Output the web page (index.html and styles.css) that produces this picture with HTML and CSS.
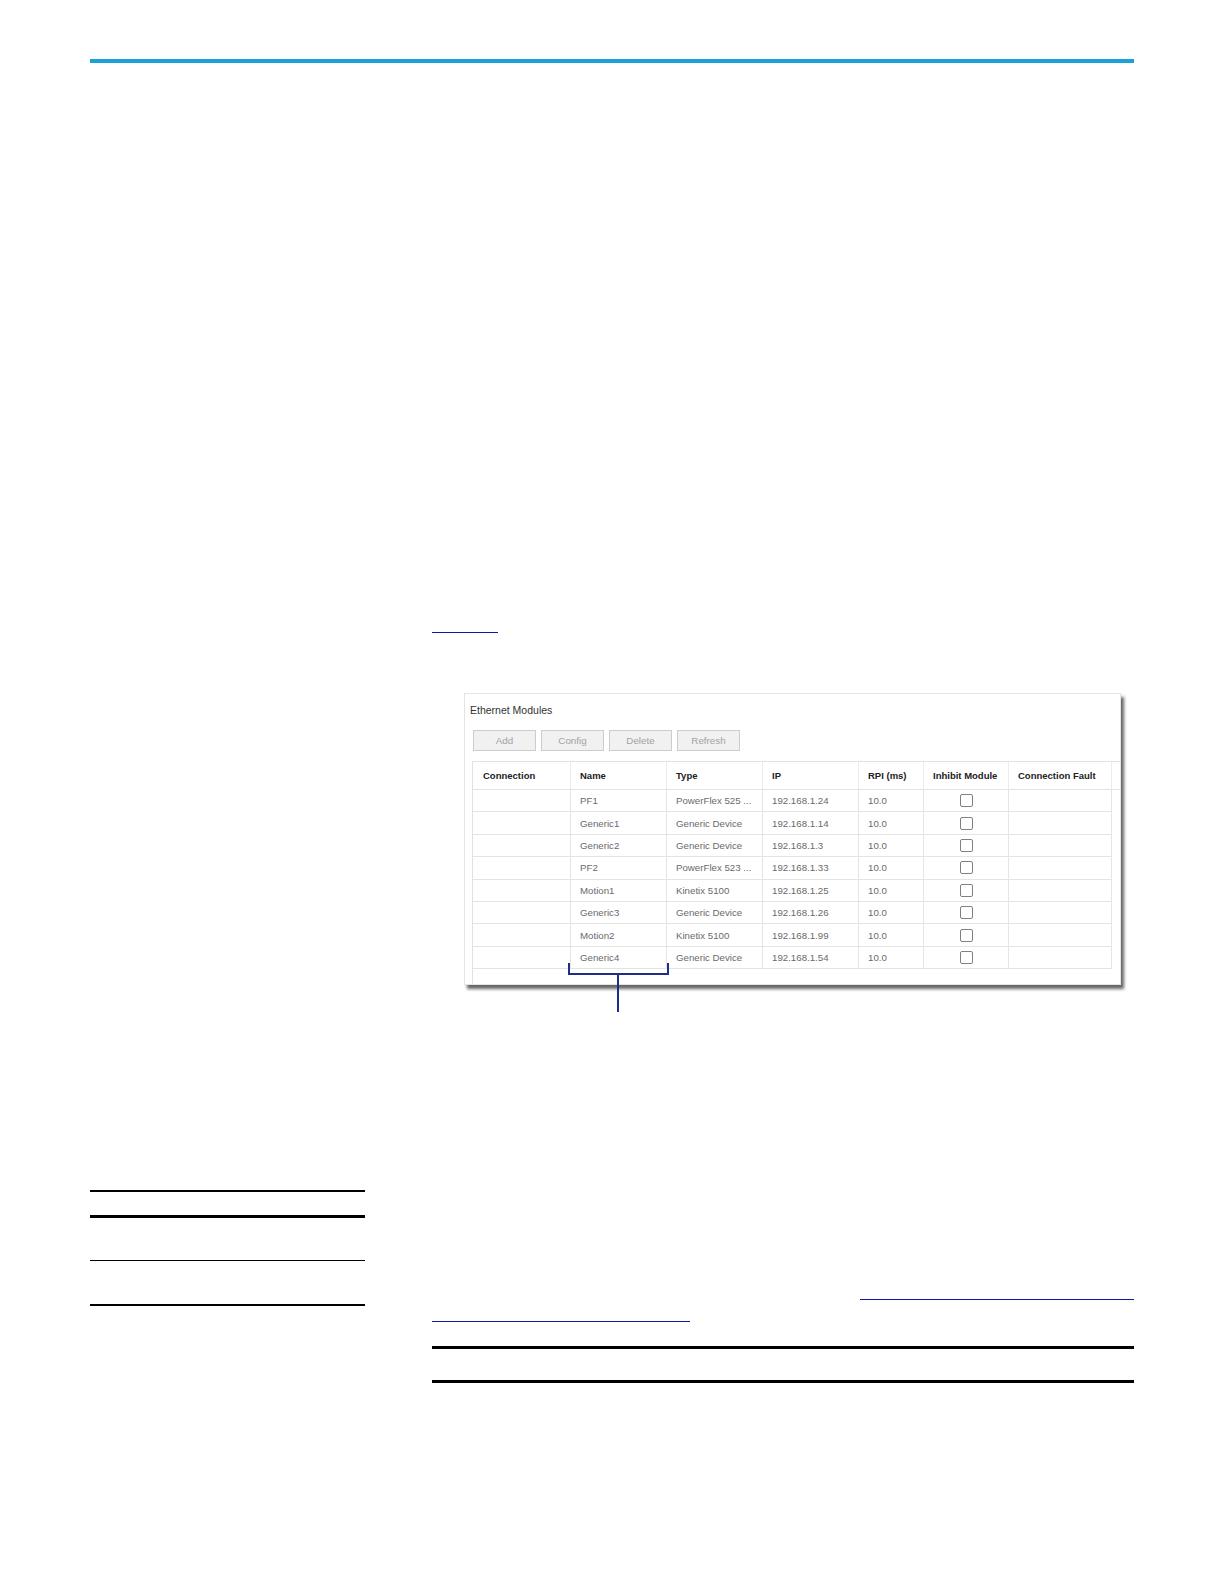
FILE: index.html
```
<!DOCTYPE html>
<html lang="en">
<head>
<meta charset="utf-8">
<title>Ethernet Modules</title>
<link rel="stylesheet" href="styles.css">
</head>
<body>
<div class="page">
  <div class="toprule"></div>

  <div class="intro">
    <div class="link-line link-a"></div>

    <div class="figure-wrap">
      <div class="figure">
        <div class="fig-title">Ethernet Modules</div>
        <div class="buttons">
          <span class="btn">Add</span>
          <span class="btn">Config</span>
          <span class="btn">Delete</span>
          <span class="btn">Refresh</span>
        </div>
        <div class="grid">
          <div class="row head">
            <div class="cell">Connection</div>
            <div class="cell">Name</div>
            <div class="cell">Type</div>
            <div class="cell">IP</div>
            <div class="cell">RPI (ms)</div>
            <div class="cell">Inhibit Module</div>
            <div class="cell">Connection Fault</div>
            <div class="cell filler"></div>
          </div>
          <div class="row"><div class="cell"></div><div class="cell">PF1</div><div class="cell">PowerFlex 525 ...</div><div class="cell">192.168.1.24</div><div class="cell">10.0</div><div class="cell center"><span class="check"></span></div><div class="cell"></div></div>
          <div class="row"><div class="cell"></div><div class="cell">Generic1</div><div class="cell">Generic Device</div><div class="cell">192.168.1.14</div><div class="cell">10.0</div><div class="cell center"><span class="check"></span></div><div class="cell"></div></div>
          <div class="row"><div class="cell"></div><div class="cell">Generic2</div><div class="cell">Generic Device</div><div class="cell">192.168.1.3</div><div class="cell">10.0</div><div class="cell center"><span class="check"></span></div><div class="cell"></div></div>
          <div class="row"><div class="cell"></div><div class="cell">PF2</div><div class="cell">PowerFlex 523 ...</div><div class="cell">192.168.1.33</div><div class="cell">10.0</div><div class="cell center"><span class="check"></span></div><div class="cell"></div></div>
          <div class="row"><div class="cell"></div><div class="cell">Motion1</div><div class="cell">Kinetix 5100</div><div class="cell">192.168.1.25</div><div class="cell">10.0</div><div class="cell center"><span class="check"></span></div><div class="cell"></div></div>
          <div class="row"><div class="cell"></div><div class="cell">Generic3</div><div class="cell">Generic Device</div><div class="cell">192.168.1.26</div><div class="cell">10.0</div><div class="cell center"><span class="check"></span></div><div class="cell"></div></div>
          <div class="row"><div class="cell"></div><div class="cell">Motion2</div><div class="cell">Kinetix 5100</div><div class="cell">192.168.1.99</div><div class="cell">10.0</div><div class="cell center"><span class="check"></span></div><div class="cell"></div></div>
          <div class="row"><div class="cell"></div><div class="cell">Generic4</div><div class="cell">Generic Device</div><div class="cell">192.168.1.54</div><div class="cell">10.0</div><div class="cell center"><span class="check"></span></div><div class="cell"></div></div>
        </div>
      </div>
      <div class="bracket"></div>
      <div class="stem"></div>
    </div>
  </div>

  <div class="section">
    <div class="side">
      <div class="rule r2 first"></div>
      <div class="rule r3 second"></div>
      <div class="rule r1 third"></div>
      <div class="rule r2 fourth"></div>
    </div>
    <div class="main">
      <div class="link-line link-b"></div>
      <div class="link-line link-c"></div>
      <div class="rule r3 tbl-top"></div>
      <div class="rule r3 tbl-bottom"></div>
    </div>
  </div>
</div>
</body>
</html>
```

FILE: styles.css
```
html, body {
  margin: 0;
  padding: 0;
  background: #ffffff;
}

body {
  font-family: "Liberation Sans", Arial, sans-serif;
  color: #333333;
}

.page {
  width: 1044px;
  padding: 59px 0 0 90px;
}

.toprule {
  height: 4px;
  background: #1ba1d8;
}

.intro {
  margin-left: 342px;
}

.link-line {
  height: 1px;
  background: #1016a0;
}

.link-a {
  width: 66px;
  margin-top: 569px;
}

.figure-wrap {
  position: relative;
  width: 657px;
  height: 319px;
  margin: 60px 0 0 32px;
}

.figure {
  box-sizing: border-box;
  width: 657px;
  height: 292px;
  border: 1px solid #e4e4e4;
  background: #ffffff;
  box-shadow: 3px 4px 3px rgba(0, 0, 0, 0.6);
  display: flex;
  flex-direction: column;
}

.fig-title {
  padding: 9px 0 0 5px;
  font-size: 10.5px;
  line-height: 14px;
  height: 16px;
  color: #333333;
}

.buttons {
  display: flex;
  gap: 5px;
  margin: 11px 0 0 8px;
}

.btn {
  box-sizing: border-box;
  width: 63px;
  height: 21px;
  border: 1px solid #cccccc;
  background: #f1f1f1;
  color: #a2a2a2;
  font-size: 9.8px;
  line-height: 19px;
  text-align: center;
}

.grid {
  flex: 1;
  margin: 10px 0 0 7px;
  border-top: 1px solid #e2e2e2;
  border-left: 1px solid #e2e2e2;
}

.row {
  display: grid;
  grid-template-columns: 98px 96px 96px 96px 65px 85px 103px;
  height: 22.4px;
  box-sizing: border-box;
}

.row.head {
  grid-template-columns: 98px 96px 96px 96px 65px 85px 103px 1fr;
  height: 28px;
}

.cell {
  box-sizing: border-box;
  border-right: 1px solid #e4e4e4;
  border-bottom: 1px solid #e4e4e4;
  padding-left: 9px;
  font-size: 9.7px;
  color: #6a6a6a;
  display: flex;
  align-items: center;
  white-space: nowrap;
  overflow: hidden;
}

.head .cell {
  font-weight: bold;
  font-size: 9.5px;
  color: #222222;
  border-right-color: #ececec;
}

.head .cell:first-child {
  padding-left: 10px;
}

.head .filler {
  border-right: none;
}

.cell.center {
  justify-content: center;
  padding-left: 0;
}

.check {
  box-sizing: border-box;
  width: 13px;
  height: 13px;
  border: 1px solid #808080;
  border-radius: 2px;
  background: #ffffff;
}

.bracket {
  position: absolute;
  left: 104px;
  top: 270px;
  width: 101px;
  height: 12px;
  box-sizing: border-box;
  border: 2px solid #1f2d8a;
  border-top: none;
}

.stem {
  position: absolute;
  left: 153px;
  top: 282px;
  width: 2px;
  height: 37px;
  background: #1f2d8a;
}

.section {
  display: grid;
  grid-template-columns: 275px 702px;
  column-gap: 67px;
  margin-top: 178px;
}

.rule {
  background: #000000;
}

.r1 { height: 1px; }
.r2 { height: 2px; }
.r3 { height: 3px; }

.second { margin-top: 23px; }
.third { margin-top: 42px; }
.fourth { margin-top: 43px; }

.link-b {
  width: 274px;
  margin: 109px 0 0 428px;
}

.link-c {
  width: 258px;
  margin-top: 21px;
}

.tbl-top {
  margin-top: 24px;
}

.tbl-bottom {
  margin-top: 31px;
}
```
